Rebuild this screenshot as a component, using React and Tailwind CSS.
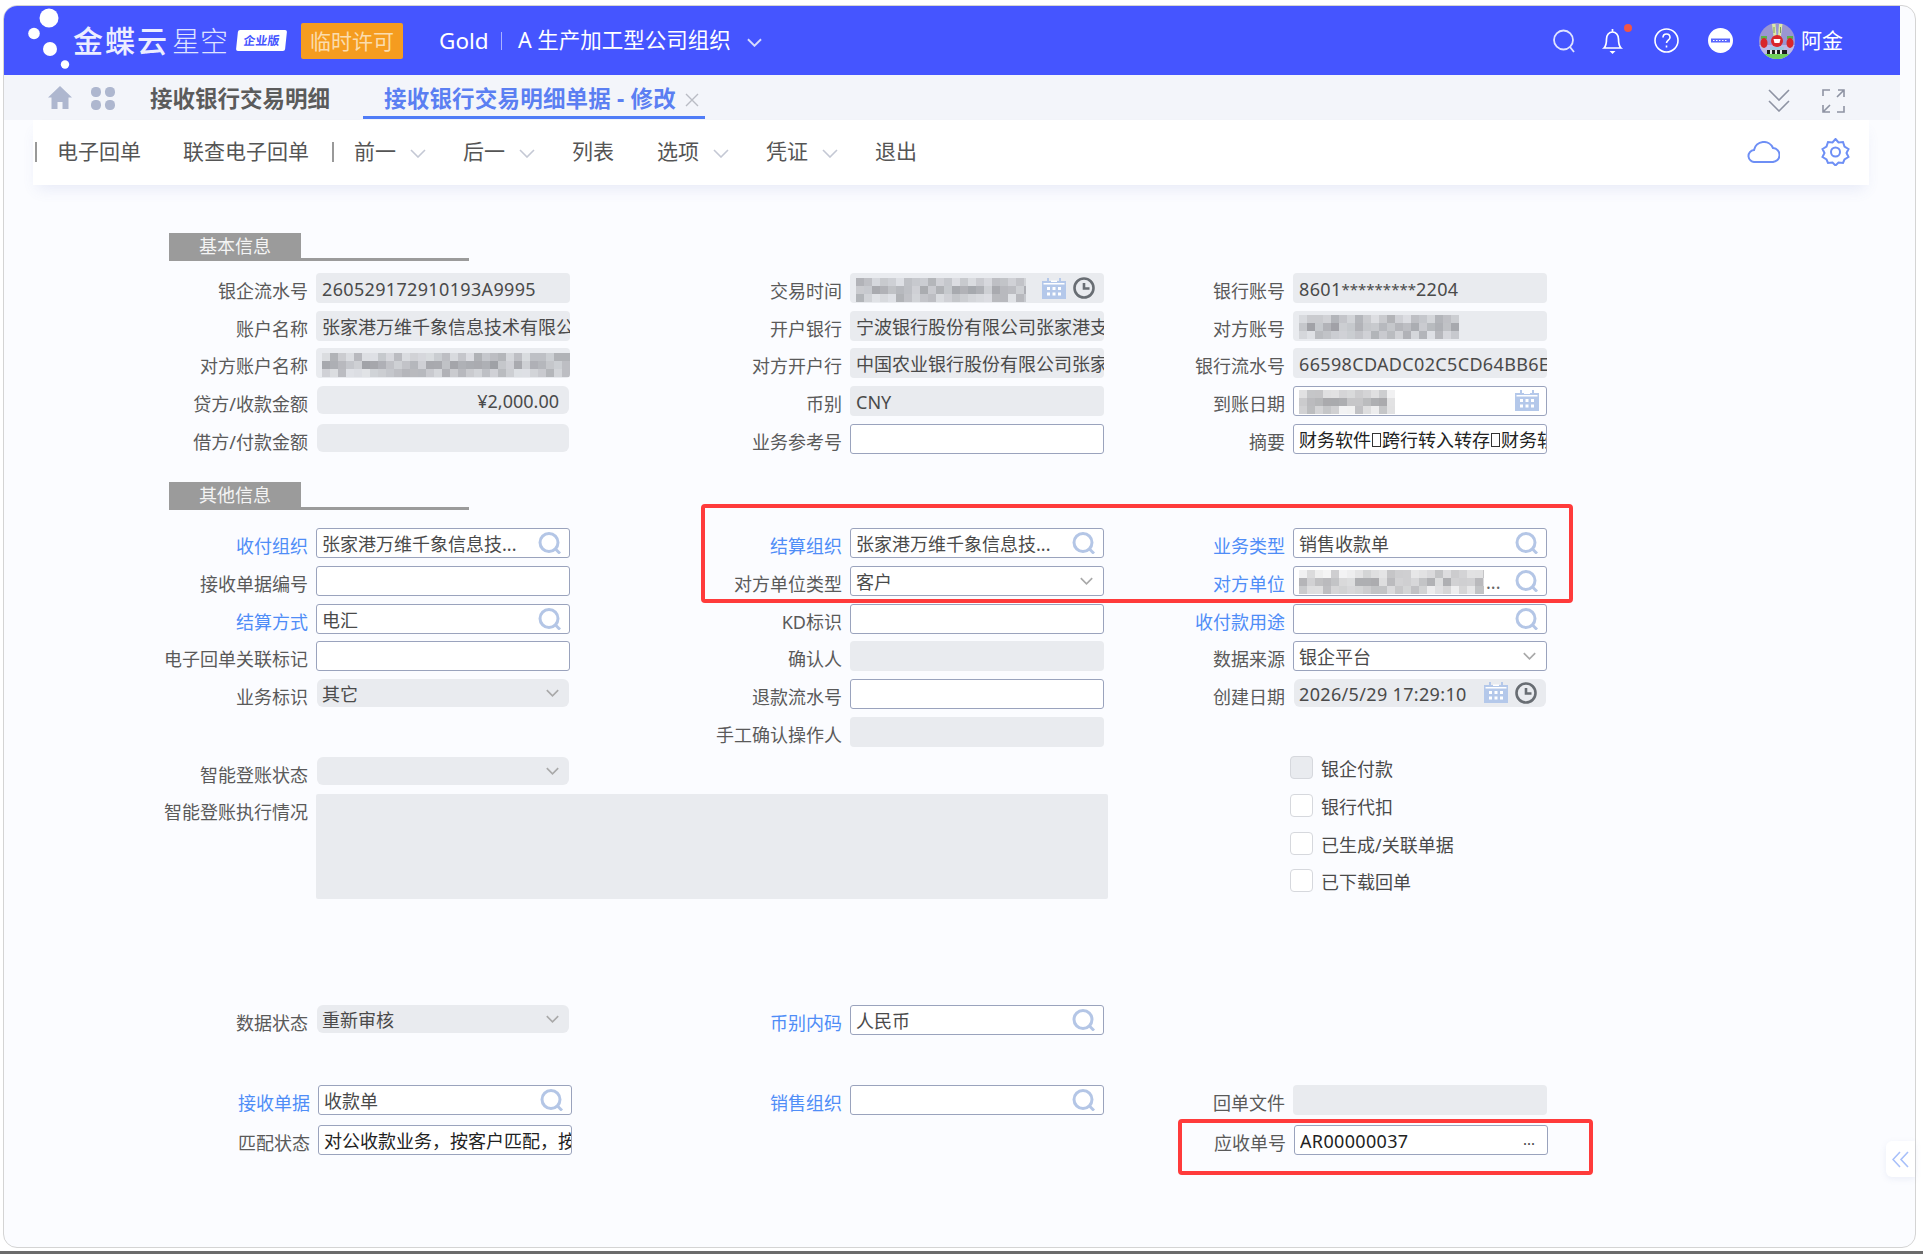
import { Fragment } from "react";

const font = "font-['Noto_Sans','Noto_Sans_CJK_SC',sans-serif]";

const Chevron = ({ className = "w-[16px] h-[9px]", color = "#c4c8d4", w = 1.6 }) => (
  <svg viewBox="0 0 16 9" className={className} fill="none" stroke={color} strokeWidth={w}>
    <path d="M1 1l7 7 7-7" />
  </svg>
);

const SelectArrow = () => <Chevron className="w-[13px] h-[8px] mr-[2px] shrink-0" color="#a9a9a9" w={2} />;

const SearchIcon = () => (
  <svg viewBox="0 0 23 22" className="w-[23px] h-[22px] shrink-0" fill="none" stroke="#b4c6e6" strokeWidth="3">
    <circle cx="11" cy="10.500" r="9" />
    <path d="M17.500 17l4.500 4.500" />
  </svg>
);

const CalendarIcon = () => (
  <svg viewBox="0 0 24 21" className="w-[24px] h-[21px] shrink-0">
    <path d="M0 3h24v18H0z" fill="#b4c8ea" />
    <path d="M5 0h2v5H5zM17 0h2v5h-2z" fill="#b4c8ea" />
    <path d="M9 2.500h6v1.500H9zM1.500 5h21v1.500h-21z" fill="#fff" />
    <path d="M5 9h3v3H5zM10.500 9h3v3h-3zM16 9h3v3h-3zM5 14.500h3v3H5zM10.500 14.500h3v3h-3zM16 14.500h3v3h-3z" fill="#fff" />
  </svg>
);

const ClockIcon = () => (
  <svg viewBox="0 0 22 22" className="w-[22px] h-[22px] shrink-0" fill="none" stroke="#686d73" strokeWidth="2.600">
    <circle cx="11" cy="11" r="9.500" />
    <path d="M11 6v5.500h5.500" />
  </svg>
);

const DateTimeIcons = () => (
  <div className="flex items-center gap-[7px] mr-[1px]">
    <CalendarIcon />
    <ClockIcon />
  </div>
);

// blurred out text in the screenshot
const Mosaic = ({ width, rows = 3, seed = 7, strong = 0.36 }) => {
  const cell = 8;
  const cols = Math.ceil(width / cell);
  const cells = [];
  let s = seed * 9973;
  for (let r = 0; r < rows; r++) {
    for (let c = 0; c < cols; c++) {
      s = (s * 1103515245 + 12345) % 2147483648;
      const v = (s >> 12) % 100;
      cells.push(
        <rect key={r + "-" + c} x={c * cell} y={r * cell} width={cell} height={cell} fill="#5f6066" opacity={(r === 1 ? 0.18 : 0.06) + (v / 100) * strong} />
      );
    }
  }
  return (
    <svg width={width} height={rows * cell} className="shrink-0">
      {cells}
    </svg>
  );
};

const Box = ({ kind = "line", children, end, text = "text-[#4a4a4a]" }) => {
  const look = {
    line: "h-[30px] w-[254px] rounded-[3px] border border-[#9aa3bd] bg-white pl-[5px]",
    gray: "h-[30px] w-[254px] rounded-[4px] bg-[#e9ebef] pl-[6px]",
    slim: "h-[28px] w-[252px] mx-px rounded-[6px] bg-[#e9ebef] pl-[5px]",
  }[kind];
  return (
    <div className={`${look} ${text} flex items-center overflow-hidden shrink-0 ${end ? "pr-[8px]" : ""}`}>
      <div className="flex-1 min-w-0 pt-[3px] h-full whitespace-nowrap overflow-hidden flex items-center">{children}</div>
      {end}
    </div>
  );
};

const Field = ({ label, blue, className = "", labelWidth, children }) => (
  <div className={`flex items-start ${className}`}>
    <div
      className={`${labelWidth || "flex-1"} shrink-0 mr-[8px] mt-[3px] h-[30px] leading-[30px] text-right whitespace-nowrap ${
        blue ? "text-[#4f8df7]" : "text-[#5a5a5a]"
      }`}
    >
      {label}
    </div>
    {children}
  </div>
);

const Title = ({ children, className = "" }) => (
  <div className={`flex items-end ml-[19px] ${className}`}>
    <div className="w-[132px] h-[28px] bg-[#9b9b9b] text-[#f4f4f4] text-center leading-[27px]">{children}</div>
    <div className="w-[168px] h-[3px] bg-[#9b9b9b]" />
  </div>
);

const Row = ({ children, className = "h-[37.67px]" }) => (
  <div className={`grid grid-cols-[420px_534px_443px] ${className}`}>{children}</div>
);

const Check = ({ label, gray }) => (
  <div className="h-[37.67px] flex items-start ml-[186px]">
    <div className={`w-[23px] h-[23px] rounded-[4px] border border-[#d6d8dd] ${gray ? "bg-[#e9ebef]" : "bg-white"}`} />
    <div className="ml-[8px] leading-[26px] text-[#4a4a4a]">{label}</div>
  </div>
);

const Tofu = () => <span className="inline-block w-[9px] h-[14px] mx-px border border-[#333] shrink-0" />;

const Avatar = () => (
  <svg viewBox="0 0 36 36" className="ml-[26px] w-[36px] h-[36px] shrink-0">
    <clipPath id="avatar">
      <circle cx="18" cy="18" r="18" />
    </clipPath>
    <g clipPath="url(#avatar)">
      <rect width="36" height="36" fill="#9a96d2" />
      <rect y="22" width="36" height="14" fill="#bdb9e6" />
      <path d="M13 1h3.500l1 12h-3zM20 1h3.500l-1.500 12h-3z" fill="#dcebA6" />
      <path d="M14.500 4h1v6h-1zM21 4h1v6h-1z" fill="#7d9a62" />
      <ellipse cx="18" cy="18" rx="6" ry="6" fill="#d8262a" />
      <path d="M14.500 16h7l-1 4h-5z" fill="#fff" />
      <path d="M2 13h6v3H2zM28 13h6v3h-6z" fill="#5cb04a" />
      <ellipse cx="5" cy="20" rx="3.500" ry="5" fill="#d8262a" />
      <ellipse cx="31" cy="20" rx="3.500" ry="5" fill="#d8262a" />
      <path d="M11 24h14v3H11z" fill="#9ec7e0" />
      <path d="M8 27h20v4H8z" fill="#1d1d1d" />
      <path d="M4 31h28v5H4z" fill="#6fcf5a" />
      <path d="M11 27h2v4h-2zM16 27h2v4h-2zM21 27h2v4h-2z" fill="#e8e8e8" />
    </g>
  </svg>
);

const Header = () => (
  <div className="h-[69px] w-[1896px] bg-[#4555ff] flex items-center text-white shrink-0">
    <svg viewBox="0 0 42 69" className="ml-[24px] w-[42px] h-[69px] shrink-0" fill="#fff">
      <ellipse cx="21" cy="12" rx="9.500" ry="9.500" />
      <circle cx="6" cy="27.500" r="5.800" />
      <circle cx="22" cy="43" r="7" />
      <circle cx="37" cy="58.500" r="4.200" />
    </svg>
    <div className="ml-[3px] text-[30px] font-medium leading-none tracking-[2px] opacity-90">金蝶云</div>
    <div className="ml-[3px] text-[28px] font-light leading-none text-[#dfe3ff]">星空</div>
    <div className="ml-[9px] w-[49px] h-[21px] bg-white text-[#4555ff] text-[12px] font-bold text-center leading-[21px] -skew-x-6 rounded-[2px]">
      企业版
    </div>
    <div className="ml-[15px] w-[102px] h-[36px] bg-[#f59c1f] text-[#fbdcae] text-[21px] text-center leading-[36px] rounded-[2px]">
      临时许可
    </div>
    <div className="ml-[36px] w-[48px] text-[22.500px] whitespace-nowrap">Gold</div>
    <div className="ml-[14px] w-px h-[18px] bg-[#aab2ff]" />
    <div className="ml-[16px] w-[211px] text-[21.500px] whitespace-nowrap">A 生产加工型公司组织</div>
    <Chevron className="ml-[18px] mt-[4px] w-[15px] h-[9px]" color="#d5dafc" w={2} />
    <svg viewBox="0 0 24 24" className="ml-[790px] w-[24px] h-[24px] shrink-0" fill="none" stroke="#dfe3ff" strokeWidth="1.800">
      <circle cx="11.500" cy="11" r="9.500" />
      <path d="M18 18l4 5" />
    </svg>
    <div className="ml-[24px] relative w-[25px] h-[26px] shrink-0">
      <svg viewBox="0 0 25 26" className="w-[25px] h-[26px]" fill="none" stroke="#fff" strokeWidth="1.700">
        <path d="M4 20c2-2 2.500-5 2.500-9 0-4 2.500-7 6-7s6 3 6 7c0 4 .5 7 2.500 9zM12.500 1v3" />
        <path d="M9.500 23h6l-3 3z" fill="#fff" stroke="none" />
      </svg>
      <div className="absolute -top-[4px] -right-[7px] w-[8px] h-[8px] rounded-full bg-[#f25545]" />
    </div>
    <svg viewBox="0 0 25 25" className="ml-[29px] w-[25px] h-[25px] shrink-0" fill="none" stroke="#fff" strokeWidth="1.600">
      <circle cx="12.500" cy="12.500" r="11.500" />
      <path d="M9 9.500c0-2 1.500-3.500 3.500-3.500s3.500 1.500 3.500 3.500c0 2.500-3.500 2.800-3.500 5.500" />
      <path d="M12.500 17.500v2" />
    </svg>
    <svg viewBox="0 0 25 25" className="ml-[29px] w-[25px] h-[25px] shrink-0">
      <circle cx="12.500" cy="12.500" r="12.500" fill="#fff" />
      <rect x="3" y="10.500" width="19" height="4" fill="#5a67ff" />
      <path d="M5 12.500h15" stroke="#fff" strokeWidth="1.200" strokeDasharray="1.500 1.500" />
    </svg>
    <Avatar />
    <div className="ml-[6px] text-[21px]">阿金</div>
  </div>
);

const Tabs = () => (
  <div className="h-[45px] w-[1896px] bg-[#f3f5fa] flex items-start shrink-0">
    <svg viewBox="0 0 24 23" className="ml-[44px] mt-[11px] w-[24px] h-[23px] shrink-0" fill="#aeb7cf">
      <path d="M12 0L0 11.500h3.500V23h6v-7h5v7h6V11.500H24z" />
    </svg>
    <svg viewBox="0 0 24 23" className="ml-[19px] mt-[12px] w-[24px] h-[23px] shrink-0" fill="#aeb7cf">
      <rect x="0" y="0" width="10" height="10" rx="4.500" />
      <rect x="14" y="0" width="10" height="10" rx="4.500" />
      <rect x="0" y="13" width="10" height="10" rx="4.500" />
      <rect x="14" y="13" width="10" height="10" rx="4.500" />
    </svg>
    <div className="ml-[35px] w-[180px] mt-[7px] text-[22.500px] font-bold leading-[34px] text-[#5b5b5b] whitespace-nowrap">接收银行交易明细</div>
    <div className="ml-[33px] w-[342px] h-[44px] border-b-[3px] border-[#4f7cf7] flex items-start pl-[21px]">
      <div className="mt-[7px] text-[22.500px] font-bold leading-[34px] tracking-[0.2px] text-[#5b7ff2] whitespace-nowrap">接收银行交易明细单据 - 修改</div>
      <svg viewBox="0 0 14 14" className="ml-[9px] mt-[18px] w-[14px] h-[14px] shrink-0" fill="none" stroke="#b9bcc4" strokeWidth="1.400">
        <path d="M1 1l12 12M13 1L1 13" />
      </svg>
    </div>
    <svg viewBox="0 0 22 23" className="ml-[1063px] mt-[14px] w-[22px] h-[23px] shrink-0" fill="none" stroke="#8e93a3" strokeWidth="1.600">
      <path d="M1 1l10 10 10-10M1 12l10 10 10-10" />
    </svg>
    <svg viewBox="0 0 23 24" className="ml-[32px] mt-[14px] w-[23px] h-[24px] shrink-0" fill="none" stroke="#8e93a3" strokeWidth="1.600">
      <path d="M1 7V1h7M22 8V1h-6M22 1l-7 7M1 16v7h7M1 23l7-7M22 17v6h-7" />
    </svg>
  </div>
);

const toolbarItems = [
  { t: "前一", m: "ml-[20px]", c: true },
  { t: "后一", m: "ml-[37px]", c: true },
  { t: "列表", m: "ml-[37px]" },
  { t: "选项", m: "ml-[43px]", c: true },
  { t: "凭证", m: "ml-[37px]", c: true },
  { t: "退出", m: "ml-[37px]" },
];

const Toolbar = () => (
  <div className="ml-[29px] w-[1836px] h-[65px] pb-[2px] bg-white shadow-[0_8px_14px_-4px_rgba(90,110,190,0.12)] flex items-center text-[21px] text-[#555] shrink-0">
    <div className="ml-[2px] w-[2px] h-[20px] bg-[#999]" />
    <div className="ml-[20px] whitespace-nowrap">电子回单</div>
    <div className="ml-[42px] whitespace-nowrap">联查电子回单</div>
    <div className="ml-[23px] w-[2px] h-[20px] bg-[#999]" />
    {toolbarItems.map((item) => (
      <Fragment key={item.t}>
        <div className={`${item.m} whitespace-nowrap`}>{item.t}</div>
        {item.c && <Chevron className="ml-[14px] mt-[3px] w-[16px] h-[9px]" />}
      </Fragment>
    ))}
    <svg viewBox="0 0 33 22" className="ml-[830px] w-[33px] h-[22px] shrink-0" fill="none" stroke="#6e8ff5" strokeWidth="2">
      <path d="M8 21h17a7 7 0 0 0 1-14 10 10 0 0 0-19 2A6 6 0 0 0 8 21z" />
    </svg>
    <svg viewBox="0 0 29 28" className="ml-[41px] w-[29px] h-[28px] shrink-0" fill="none" stroke="#6e8ff5" strokeWidth="2">
      <path d="M14.500 1l3 3.500 4.500-.5 1.500 4.500 4 2.500-2 4 2 4-4 2.500-1.500 3.500-4.500-.5-3 3-3-3-4.500.5-1.500-3.500-4-2.500 2-4-2-4 4-2.500L7 4l4.500.5z" />
      <circle cx="14.500" cy="14" r="4.500" />
    </svg>
  </div>
);

const Dots = () => <span className="ml-[2px] text-[#666]">...</span>;

const Digits = ({ children }) => <span className="tracking-[0.34px]">{children}</span>;

const Form = () => (
  <div className={`pl-[146px] pt-[48px] text-[18px] ${font}`}>
    <Title>基本信息</Title>
    <div className="mt-[12px]">
      <Row>
        <Field label="银企流水号"><Box kind="gray"><Digits>260529172910193A9995</Digits></Box></Field>
        <Field label="交易时间">
          <Box kind="gray" end={<DateTimeIcons />}>
            <Mosaic width={170} rows={3} seed={3} />
          </Box>
        </Field>
        <Field label="银行账号">
          <Box kind="gray">
            <Digits>8601</Digits>
            <span className="text-[15px]">*********</span>
            <Digits>2204</Digits>
          </Box>
        </Field>
      </Row>
      <Row>
        <Field label="账户名称"><Box kind="gray">张家港万维千象信息技术有限公司</Box></Field>
        <Field label="开户银行"><Box kind="gray">宁波银行股份有限公司张家港支行</Box></Field>
        <Field label="对方账号"><Box kind="gray"><Mosaic width={160} rows={3} seed={5} /></Box></Field>
      </Row>
      <Row>
        <Field label="对方账户名称"><Box kind="gray"><Mosaic width={250} rows={3} seed={11} /></Box></Field>
        <Field label="对方开户行"><Box kind="gray">中国农业银行股份有限公司张家港</Box></Field>
        <Field label="银行流水号"><Box kind="gray"><Digits>66598CDADC02C5CD64BB6E8</Digits></Box></Field>
      </Row>
      <Row>
        <Field label="贷方/收款金额"><Box kind="slim"><span className="ml-auto mr-[10px]">¥2,000.00</span></Box></Field>
        <Field label="币别"><Box kind="gray">CNY</Box></Field>
        <Field label="到账日期">
          <Box kind="line" end={<div className="-mr-[1px]"><CalendarIcon /></div>}><Mosaic width={96} rows={3} seed={13} /></Box>
        </Field>
      </Row>
      <Row>
        <Field label="借方/付款金额"><Box kind="slim" /></Field>
        <Field label="业务参考号"><Box /></Field>
        <Field label="摘要">
          <Box text="text-[#222]">财务软件<Tofu />跨行转入转存<Tofu />财务软件</Box>
        </Field>
      </Row>
    </div>

    <Title className="mt-[21px]">其他信息</Title>
    <div className="mt-[18px]">
      <Row>
        <Field label="收付组织" blue><Box end={<SearchIcon />}>张家港万维千象信息技...</Box></Field>
        <Field label="结算组织" blue><Box end={<SearchIcon />}>张家港万维千象信息技...</Box></Field>
        <Field label="业务类型" blue><Box end={<SearchIcon />}>销售收款单</Box></Field>
      </Row>
      <Row>
        <Field label="接收单据编号"><Box /></Field>
        <Field label="对方单位类型"><Box end={<SelectArrow />}>客户</Box></Field>
        <Field label="对方单位" blue>
          <Box end={<SearchIcon />}><Mosaic width={185} rows={3} seed={17} /><Dots /></Box>
        </Field>
      </Row>
      <Row>
        <Field label="结算方式" blue><Box end={<SearchIcon />}>电汇</Box></Field>
        <Field label="KD标识"><Box /></Field>
        <Field label="收付款用途" blue><Box end={<SearchIcon />} /></Field>
      </Row>
      <Row>
        <Field label="电子回单关联标记"><Box /></Field>
        <Field label="确认人"><Box kind="gray" /></Field>
        <Field label="数据来源"><Box end={<SelectArrow />}>银企平台</Box></Field>
      </Row>
      <Row>
        <Field label="业务标识"><Box kind="slim" end={<SelectArrow />}>其它</Box></Field>
        <Field label="退款流水号"><Box /></Field>
        <Field label="创建日期">
          <Box kind="slim" end={<DateTimeIcons />}>
            <Digits>2026/5/29 17:29:10</Digits>
          </Box>
        </Field>
      </Row>
      <Row>
        <div />
        <Field label="手工确认操作人"><Box kind="gray" /></Field>
        <div />
      </Row>
    </div>

    <div className="grid grid-cols-[954px_443px]">
      <div>
        <Field label="智能登账状态" labelWidth="w-[158px]" className="mt-[3px] h-[37px]">
          <Box kind="slim" end={<SelectArrow />} />
        </Field>
        <Field label="智能登账执行情况" labelWidth="w-[158px]">
          <div className="w-[792px] h-[105px] bg-[#e9ebef] rounded-[2px] shrink-0" />
        </Field>
      </div>
      <div className="pt-[2px]">
        <Check label="银企付款" gray />
        <Check label="银行代扣" />
        <Check label="已生成/关联单据" />
        <Check label="已下载回单" />
      </div>
    </div>

    <Row className="mt-[98px] h-[80px]">
      <Field label="数据状态"><Box kind="slim" end={<SelectArrow />}>重新审核</Box></Field>
      <Field label="币别内码" blue><Box end={<SearchIcon />}>人民币</Box></Field>
      <div />
    </Row>
    <Row className="h-[40px]">
      <Field label="接收单据" blue className="ml-[2px] -mr-[2px]"><Box end={<SearchIcon />}>收款单</Box></Field>
      <Field label="销售组织" blue><Box end={<SearchIcon />} /></Field>
      <Field label="回单文件"><Box kind="gray" /></Field>
    </Row>
    <Row className="h-[40px]">
      <Field label="匹配状态" className="ml-[2px] -mr-[2px]"><Box text="text-[#222]">对公收款业务，按客户匹配，按</Box></Field>
      <div />
      <Field label="应收单号" className="ml-px -mr-px">
        <Box text="text-[#222]" end={<span className="text-[#444] text-[15px] leading-none mr-[4px]">...</span>}>
          <Digits>AR00000037</Digits>
        </Box>
      </Field>
    </Row>
  </div>
);

const App = () => (
  <div className={`relative w-[1923px] h-[1254px] bg-white overflow-hidden ${font}`}>
    <div className="ml-[3px] pt-[5px]">
      <div className="w-[1913px] h-[1243px] border border-[#d4d4d4] rounded-[14px] overflow-hidden bg-[#fbfcff]">
        <Header />
        <Tabs />
        <Toolbar />
        <Form />
      </div>
    </div>
    <div className="mt-[3px] h-[3px] bg-[#6b6b6b]" />

    {/* right edge fold-out */}
    <div className="absolute left-[1886px] top-[1141px] w-[29px] h-[36px] bg-white rounded-l-[6px] flex items-center justify-center shadow-[0_2px_6px_rgba(120,140,200,0.12)]">
      <svg viewBox="0 0 17 17" className="w-[17px] h-[17px]" fill="none" stroke="#a8c0fa" strokeWidth="1.600">
        <path d="M8 1L1 8.500 8 16M16 1L9 8.500 16 16" />
      </svg>
    </div>

    {/* red marks drawn on the screenshot */}
    <div className="absolute left-[701px] top-[504px] w-[872px] h-[99px] border-[4px] border-[#ff3b3b] rounded-[4px]" />
    <div className="absolute left-[1178px] top-[1119px] w-[415px] h-[56px] border-[4px] border-[#ff3b3b] rounded-[4px]" />
  </div>
);

export default App;
